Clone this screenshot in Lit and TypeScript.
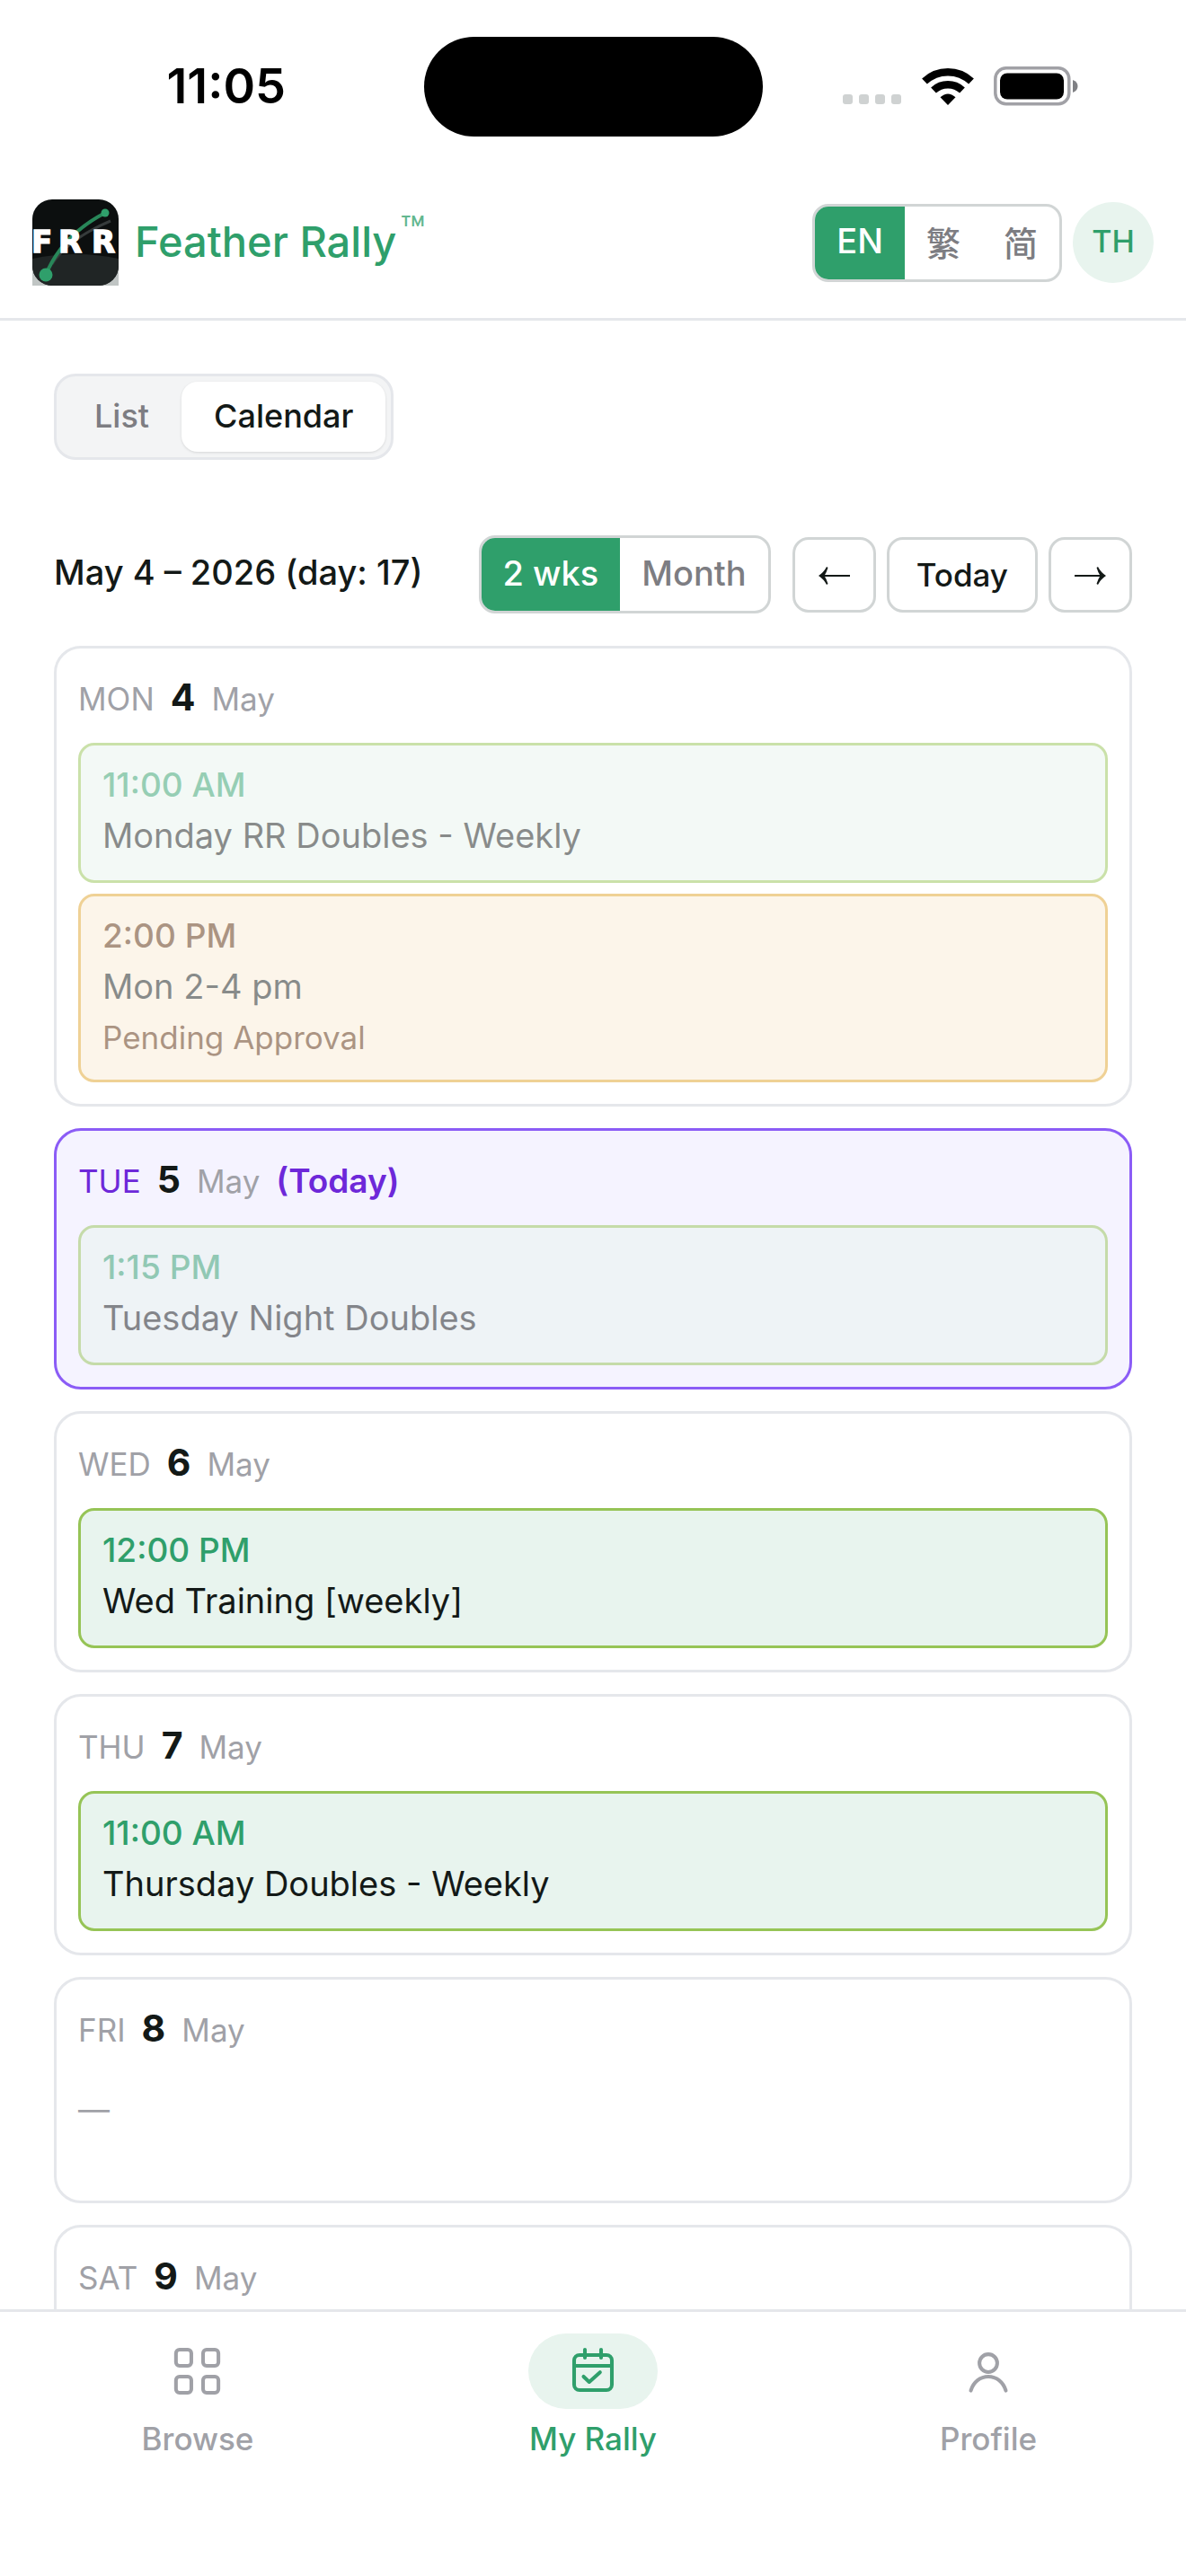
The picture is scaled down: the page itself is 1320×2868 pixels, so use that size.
import { LitElement, html, css, svg, nothing } from "lit";
import { customElement, property, state } from "lit/decorators.js";
import { classMap } from "lit/directives/class-map.js";

interface RallyEvent {
  time: string;
  title: string;
  note?: string;
  past?: boolean;
  pending?: boolean;
}

interface Day {
  weekday: string;
  date: number;
  month: string;
  today?: boolean;
  events: RallyEvent[];
}

const DAYS: Day[] = [
  {
    weekday: "MON",
    date: 4,
    month: "May",
    events: [
      { time: "11:00 AM", title: "Monday RR Doubles - Weekly", past: true },
      { time: "2:00 PM", title: "Mon 2-4 pm", note: "Pending Approval", past: true, pending: true },
    ],
  },
  {
    weekday: "TUE",
    date: 5,
    month: "May",
    today: true,
    events: [{ time: "1:15 PM", title: "Tuesday Night Doubles", past: true }],
  },
  { weekday: "WED", date: 6, month: "May", events: [{ time: "12:00 PM", title: "Wed Training [weekly]" }] },
  { weekday: "THU", date: 7, month: "May", events: [{ time: "11:00 AM", title: "Thursday Doubles - Weekly" }] },
  { weekday: "FRI", date: 8, month: "May", events: [] },
  { weekday: "SAT", date: 9, month: "May", events: [] },
];

const shared = css`
  * {
    box-sizing: border-box;
  }
  button {
    margin: 0;
    border: 0;
    background: none;
    color: inherit;
    font: inherit;
    cursor: pointer;
  }
  svg {
    display: block;
    flex: none;
  }
`;

@customElement("status-bar")
class StatusBar extends LitElement {
  static styles = [
    shared,
    css`
      :host {
        display: grid;
        grid-template-columns: 1fr 377px 1fr;
        align-items: center;
        height: 186px;
        padding-top: 6px;
        color: #000;
      }
      .time {
        justify-self: center;
        padding-left: 32px;
        font-size: 54px;
        font-weight: 600;
        line-height: 60px;
      }
      .island {
        height: 111px;
        border-radius: 56px;
        background: #000;
      }
      .system {
        display: flex;
        align-items: center;
        justify-self: center;
        gap: 22px;
        padding-right: 30px;
      }
    `,
  ];

  render() {
    return html`
      <span class="time">11:05</span>
      <span class="island"></span>
      <span class="system">
        <svg width="66" height="44" viewBox="0 0 66 44" fill="#cfd2d2" aria-hidden="true">
          ${[0, 18, 36, 54].map((x) => svg`<rect x=${x} y="31" width="11" height="11" rx="3" />`)}
        </svg>
        <svg width="58" height="44" viewBox="0 0 58 44" aria-hidden="true">
          <g fill="none" stroke="#000" stroke-width="8.4">
            <path d="M3 16.500A38 38 0 0 1 55 16.500" />
            <path d="M13 26.500A23.500 23.500 0 0 1 45 26.500" />
          </g>
          <path d="M29 43L20.500 34.200Q29 26.600 37.500 34.200Z" />
        </svg>
        <svg width="94" height="44" viewBox="0 0 94 44" aria-hidden="true">
          <rect x="1.800" y="1.800" width="82" height="40" rx="12" fill="none" stroke="#a1a1a6" stroke-width="3.500" />
          <rect x="7" y="7.500" width="71" height="29" rx="8" />
          <path d="M88 15Q93.500 17 93.500 22T88 29Z" fill="#7f8084" />
        </svg>
      </span>
    `;
  }
}

@customElement("app-header")
class AppHeader extends LitElement {
  @state() private lang = "EN";

  static styles = [
    shared,
    css`
      :host {
        display: flex;
        align-items: center;
        justify-content: space-between;
        padding: 36px;
        border-bottom: 3px solid #e5e7eb;
      }
      .brand {
        display: flex;
        align-items: center;
        gap: 18px;
        color: #2f9f6b;
        text-decoration: none;
      }
      .name {
        display: flex;
        align-items: flex-start;
        gap: 4px;
        padding-bottom: 3px;
        font-size: 47px;
        font-weight: 500;
        line-height: 60px;
      }
      .mark {
        font-size: 46px;
        font-weight: 400;
        line-height: 36px;
        opacity: 0.75;
      }
      .letters {
        fill: #fff;
        stroke: #fff;
        stroke-width: 1.500;
        font: 700 34px "DejaVu Sans", sans-serif;
      }
      .actions {
        display: flex;
        align-items: center;
        gap: 12px;
      }
      .langs {
        display: flex;
        overflow: hidden;
        border: 3px solid #d1d5d5;
        border-radius: 18px;
      }
      .lang {
        height: 81px;
        padding: 0 24px 4px;
        color: #7d7d82;
        font-size: 38px;
        font-weight: 500;
      }
      .lang.on {
        background: #2f9f6b;
        color: #fff;
      }
      .avatar {
        width: 90px;
        height: 90px;
        padding: 0 0 3px;
        border-radius: 50%;
        background: #e8f4ee;
        color: #2f9f6b;
        font-size: 34px;
        font-weight: 500;
      }
    `,
  ];

  render() {
    return html`
      <a class="brand" href="#home">
        <svg width="96" height="96" viewBox="0 0 96 96" aria-hidden="true">
          <defs>
            <clipPath id="tile"><rect width="96" height="96" rx="22" /></clipPath>
          </defs>
          <path d="M0 72h96v24H0z" fill="#c0c5c4" />
          <g clip-path="url(#tile)">
            <rect width="96" height="96" fill="#0c0f0f" />
            <path d="M0 66Q48 56 96 66V96H0Z" fill="#202525" />
            <path d="M22 72Q40 44 87 24" fill="none" stroke="#363b3b" stroke-width="3" />
            <path d="M15 84Q33 40 81 15" fill="none" stroke="#288759" stroke-width="4" />
            <circle cx="81" cy="15" r="4.500" fill="#2f9f6b" />
            <circle cx="15" cy="84" r="7.500" fill="#2f9f6b" />
          </g>
          <g class="letters">
            <text x="-1" y="59">F</text>
            <text x="29" y="59">R</text>
            <text x="66" y="59">R</text>
          </g>
        </svg>
        <span class="name">Feather Rally<span class="mark">™</span></span>
      </a>
      <div class="actions">
        <div class="langs" role="group" aria-label="Language">
          ${["EN", "繁", "简"].map(
            (l) => html`<button
              class=${classMap({ lang: true, on: l === this.lang })}
              aria-pressed=${l === this.lang}
              @click=${() => (this.lang = l)}
            >${l}</button>`,
          )}
        </div>
        <button class="avatar">TH</button>
      </div>
    `;
  }
}

@customElement("day-card")
class DayCard extends LitElement {
  @property({ attribute: false }) day!: Day;

  static styles = [
    shared,
    css`
      :host {
        display: block;
      }
      .card {
        min-height: 252px;
        padding: 24px;
        border: 3px solid #e5e7eb;
        border-radius: 30px;
        background: #fff;
      }
      .card.today {
        border-color: #8b5cf6;
        background: #f5f3ff;
      }
      .heading {
        display: flex;
        align-items: baseline;
        gap: 18px;
        height: 81px;
        margin: 0;
        color: #a0a1a7;
        font-size: 35px;
        font-weight: 400;
        line-height: 60px;
      }
      .today .weekday {
        color: #6d28d9;
      }
      .date {
        color: #131917;
        font-size: 41px;
        font-weight: 700;
      }
      .now {
        color: #6d28d9;
        font-size: 37px;
        font-weight: 600;
      }
      .events {
        display: flex;
        flex-direction: column;
        gap: 12px;
      }
      .event {
        padding: 15px 24px 21px;
        border: 3px solid #96c456;
        border-radius: 18px;
        background: #e8f4ee;
        color: #131917;
        font-size: 38px;
        line-height: 57px;
      }
      .event p {
        margin: 0;
      }
      .event .time {
        color: #2f9f6b;
        font-size: 37px;
        font-weight: 500;
      }
      .event .note {
        padding-top: 3px;
        font-size: 35px;
        line-height: 51px;
      }
      .past {
        opacity: 0.5;
      }
      .pending {
        border-color: #e1a52d;
        background: #fbecd6;
      }
      .pending .time,
      .pending .note {
        color: #592c08;
      }
      .empty {
        margin: 0;
        padding-top: 12px;
        color: #a0a1a7;
        font-size: 35px;
        line-height: 54px;
      }
    `,
  ];

  render() {
    const d = this.day;
    return html`
      <section class=${classMap({ card: true, today: !!d.today })}>
        <h2 class="heading">
          <span class="weekday">${d.weekday}</span>
          <span class="date">${d.date}</span>
          <span>${d.month}</span>
          ${d.today ? html`<span class="now">(Today)</span>` : nothing}
        </h2>
        ${d.events.length
          ? html`<div class="events">
              ${d.events.map(
                (e) => html`<article class=${classMap({ event: true, past: !!e.past, pending: !!e.pending })}>
                  <p class="time">${e.time}</p>
                  <p>${e.title}</p>
                  ${e.note ? html`<p class="note">${e.note}</p>` : nothing}
                </article>`,
              )}
            </div>`
          : html`<p class="empty">—</p>`}
      </section>
    `;
  }
}

const NAV = [
  {
    label: "Browse",
    icon: svg`
      <rect x="3.950" y="4" width="5.700" height="6" rx="1.300" />
      <rect x="14" y="4" width="5.700" height="6" rx="1.300" />
      <rect x="3.950" y="14" width="5.700" height="6" rx="1.300" />
      <rect x="14" y="14" width="5.700" height="6" rx="1.300" />`,
  },
  {
    label: "My Rally",
    icon: svg`
      <rect x="5" y="6" width="14" height="13" rx="2" />
      <path d="M9 4v3M15 4v3M5 10h14M8.500 14l2.100 2L14.600 12.400" />`,
  },
  {
    label: "Profile",
    icon: svg`
      <circle cx="12" cy="9" r="3.300" />
      <path d="M5.500 19.200C6.500 16 9 14 12 14s5.500 2 6.500 5.200" />`,
  },
];

@customElement("tab-bar")
class TabBar extends LitElement {
  static styles = [
    shared,
    css`
      :host {
        display: block;
        border-top: 3px solid #e5e7eb;
        background: #fff;
      }
      .bar {
        display: grid;
        grid-template-columns: repeat(3, 1fr);
        padding: 24px 0 126px;
      }
      .tab {
        display: flex;
        flex-direction: column;
        align-items: center;
        gap: 6px;
        color: #a0a1a7;
        font-size: 35px;
        font-weight: 500;
        line-height: 54px;
        text-decoration: none;
      }
      .pill {
        display: grid;
        place-items: center;
        width: 144px;
        height: 84px;
        border-radius: 42px;
      }
      .tab.on {
        color: #2f9f6b;
      }
      .tab.on .pill {
        background: #e8f4ee;
      }
      .icon {
        fill: none;
        stroke: currentColor;
        stroke-width: 1.350;
        stroke-linecap: round;
        stroke-linejoin: round;
      }
    `,
  ];

  render() {
    return html`<nav class="bar" aria-label="Main">
      ${NAV.map(
        (n, i) => html`<a class=${classMap({ tab: true, on: i === 1 })} href="#${n.label.toLowerCase().replace(" ", "-")}">
          <span class="pill"><svg class="icon" width="72" height="72" viewBox="0 0 24 24" aria-hidden="true">${n.icon}</svg></span>
          ${n.label}
        </a>`,
      )}
    </nav>`;
  }
}

@customElement("app-root")
class AppRoot extends LitElement {
  @state() private view = "Calendar";
  @state() private span = "2 wks";

  static styles = [
    shared,
    css`
      :host {
        display: flex;
        flex-direction: column;
        height: 100vh;
        overflow: hidden;
        background: #fff;
        color: #131917;
        font-family: Inter, "Noto Sans CJK SC", sans-serif;
      }
      .page {
        flex: 1;
        min-height: 0;
        overflow: hidden;
        padding: 59px 60px 0;
      }
      .views {
        display: inline-flex;
        padding: 6px;
        border: 3px solid #e5e7eb;
        border-radius: 24px;
        background: #f3f4f5;
        vertical-align: top;
      }
      .view {
        height: 78px;
        padding: 0 36px 2px;
        border-radius: 18px;
        color: #7d7d82;
        font-size: 36px;
        font-weight: 500;
      }
      .view.on {
        background: #fff;
        color: #131917;
        box-shadow: 0 1px 3px rgba(0, 0, 0, 0.12);
      }
      .toolbar {
        display: flex;
        align-items: center;
        gap: 24px;
        margin: 84px 0 36px;
      }
      .range {
        flex: 1;
        margin: 0;
        padding-bottom: 6px;
        font-size: 38px;
        font-weight: 500;
        line-height: 54px;
      }
      .spans {
        display: flex;
        overflow: hidden;
        border: 3px solid #d1d5d5;
        border-radius: 18px;
      }
      .span {
        height: 81px;
        padding: 0 24px 4px;
        color: #7d7d82;
        font-size: 38px;
        font-weight: 500;
      }
      .span.on {
        background: #2f9f6b;
        color: #fff;
      }
      .steps {
        display: flex;
        gap: 12px;
      }
      .step {
        display: grid;
        place-items: center;
        height: 84px;
        padding: 2px 26px 0;
        border: 3px solid #d1d5d5;
        border-radius: 18px;
      }
      .step.now {
        padding: 0 30px;
        font-size: 35px;
        font-weight: 500;
      }
      .arrow {
        fill: none;
        stroke: #131917;
        stroke-width: 2;
      }
      .head {
        fill: #131917;
        stroke: none;
      }
      .days {
        display: flex;
        flex-direction: column;
        gap: 24px;
      }
    `,
  ];

  render() {
    return html`
      <status-bar></status-bar>
      <app-header></app-header>
      <main class="page">
        <div class="views" role="group" aria-label="View">
          ${["List", "Calendar"].map(
            (v) => html`<button
              class=${classMap({ view: true, on: v === this.view })}
              aria-pressed=${v === this.view}
              @click=${() => (this.view = v)}
            >${v}</button>`,
          )}
        </div>
        <div class="toolbar">
          <h1 class="range">May 4 – 2026 (day: 17)</h1>
          <div class="spans" role="group" aria-label="Range">
            ${["2 wks", "Month"].map(
              (s) => html`<button
                class=${classMap({ span: true, on: s === this.span })}
                aria-pressed=${s === this.span}
                @click=${() => (this.span = s)}
              >${s}</button>`,
            )}
          </div>
          <div class="steps">
            <button class="step" aria-label="Previous">
              <svg class="arrow" width="35" height="22" viewBox="0 0 35 22" aria-hidden="true">
                <path d="M4 11H35" />
                <path class="head" d="M0 11Q6 7 9 1L10.500 2Q9 7 6.500 11Q9 15 10.500 20L9 21Q6 15 0 11Z" />
              </svg>
            </button>
            <button class="step now">Today</button>
            <button class="step" aria-label="Next">
              <svg class="arrow" width="35" height="22" viewBox="0 0 35 22" aria-hidden="true">
                <path d="M0 11H31" />
                <path class="head" d="M35 11Q29 7 26 1L24.500 2Q26 7 28.500 11Q26 15 24.500 20L26 21Q29 15 35 11Z" />
              </svg>
            </button>
          </div>
        </div>
        <div class="days">${DAYS.map((d) => html`<day-card .day=${d}></day-card>`)}</div>
      </main>
      <tab-bar></tab-bar>
    `;
  }
}
